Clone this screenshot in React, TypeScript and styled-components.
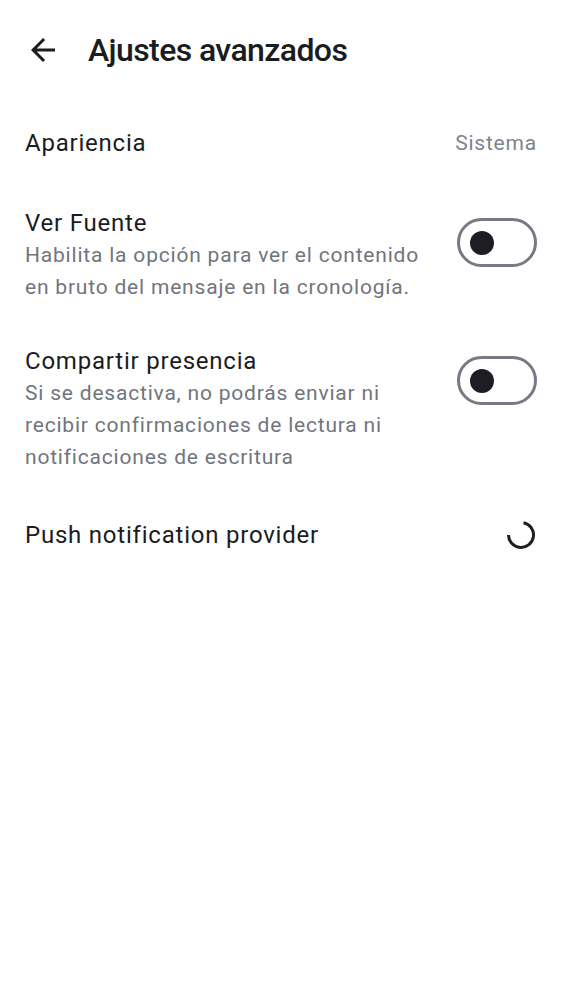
import React from "react";
import styled, { createGlobalStyle } from "styled-components";

const Global = createGlobalStyle`
  html, body { margin: 0; padding: 0; background: #ffffff; }
  body { font-family: Roboto, "Noto Sans", sans-serif; color: #1b1c20; }
  * { box-sizing: border-box; }
`;

const Screen = styled.div`
  width: 562px;
  min-height: 1000px;
  background: #ffffff;
  display: flex;
  flex-direction: column;
`;

const TopBar = styled.header`
  height: 100px;
  display: flex;
  align-items: center;
  padding: 0 25px;
  gap: 27px;
`;

const BackButton = styled.button`
  width: 36px;
  height: 36px;
  padding: 0;
  border: none;
  background: transparent;
  display: flex;
  align-items: center;
  justify-content: center;
  color: #1b1c20;
  cursor: pointer;
`;

const Title = styled.h1`
  margin: 0;
  font-size: 32px;
  font-weight: 500;
  line-height: 40px;
  color: #1b1c20;
  letter-spacing: -0.6px;
`;

const List = styled.div`
  display: flex;
  flex-direction: column;
`;

const Row = styled.div<{ $pt: number; $pb: number; $align?: string }>`
  display: flex;
  align-items: ${(p) => p.$align ?? "center"};
  justify-content: space-between;
  gap: 24px;
  padding: ${(p) => p.$pt}px 25px ${(p) => p.$pb}px 25px;
`;

const TextCol = styled.div`
  display: flex;
  flex-direction: column;
  flex: 1;
  min-width: 0;
`;

const Label = styled.div`
  font-size: 24px;
  line-height: 32px;
  letter-spacing: 0.78px;
  color: #1b1c20;
`;

const Description = styled.div`
  font-size: 21px;
  line-height: 32px;
  letter-spacing: 0.8px;
  color: #71757d;
`;

const Value = styled.div`
  font-size: 21px;
  line-height: 32px;
  letter-spacing: 0.8px;
  color: #80848c;
`;

const SwitchTrack = styled.div`
  flex: none;
  width: 80px;
  height: 49px;
  margin-top: 11px;
  border: 3px solid #767a82;
  border-radius: 25px;
  display: flex;
  align-items: center;
  padding-left: 10px;
`;

const SwitchThumb = styled.div`
  width: 24px;
  height: 24px;
  border-radius: 50%;
  background: #1d1e23;
`;

const Spinner = styled.svg`
  flex: none;
  width: 34px;
  height: 34px;
  margin-right: -1px;
`;

const Switch = () => (
  <SwitchTrack>
    <SwitchThumb />
  </SwitchTrack>
);

export default function App() {
  return (
    <>
      <Global />
      <Screen>
        <TopBar>
          <BackButton aria-label="Atrás">
            <svg width="36" height="36" viewBox="0 0 24 24">
              <path
                d="M20 11H7.83l5.59-5.59L12 4l-8 8 8 8 1.41-1.41L7.83 13H20v-2z"
                fill="#1b1c20"
              />
            </svg>
          </BackButton>
          <Title>Ajustes avanzados</Title>
        </TopBar>
        <List>
          <Row $pt={27} $pb={27}>
            <Label>Apariencia</Label>
            <Value>Sistema</Value>
          </Row>
          <Row $pt={21} $pb={21} $align="flex-start">
            <TextCol>
              <Label>Ver Fuente</Label>
              <Description>
                Habilita la opción para ver el contenido en bruto del mensaje en la cronología.
              </Description>
            </TextCol>
            <Switch />
          </Row>
          <Row $pt={21} $pb={21} $align="flex-start">
            <TextCol>
              <Label>Compartir presencia</Label>
              <Description>
                Si se desactiva, no podrás enviar ni recibir confirmaciones de lectura ni notificaciones de escritura
              </Description>
            </TextCol>
            <Switch />
          </Row>
          <Row $pt={24} $pb={24}>
            <Label>Push notification provider</Label>
            <Spinner viewBox="0 0 34 34">
              <path
                d="M 19.5 4.7 A 12.5 12.5 0 1 1 4.5 17"
                fill="none"
                stroke="#1d1e23"
                strokeWidth="3"
              />
            </Spinner>
          </Row>
        </List>
      </Screen>
    </>
  );
}
